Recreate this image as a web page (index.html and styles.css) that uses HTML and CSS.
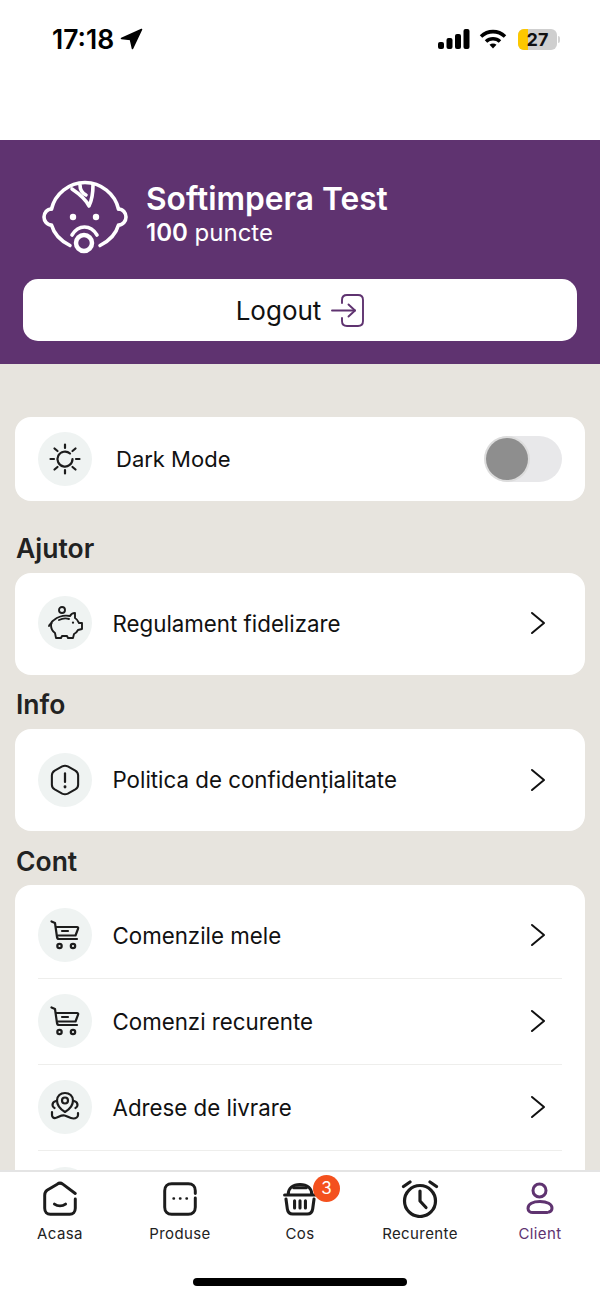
FILE: index.html

```html
<!DOCTYPE html>
<html lang="en">
<head>
  <meta charset="UTF-8" />
  <title>Client</title>
  <link rel="stylesheet" href="styles.css">
</head>
<body>
  <div class="page">
    <div class="status">
      <div class="status-left">
        <span class="time">17:18</span>
        <svg class="loc" width="23" height="22" viewBox="0 0 23 22"><path d="M21.500 1.500 1.500 10.500 10.500 11.500 12.500 20.500z" fill="#000" stroke="#000" stroke-width="1.600" stroke-linejoin="round"/></svg>
      </div>
      <div class="status-right">
        <svg width="32" height="20" viewBox="0 0 32 20"><rect x="0" y="13" width="6" height="7" rx="2"/><rect x="8.500" y="9" width="6" height="11" rx="2"/><rect x="17" y="5" width="6" height="15" rx="2"/><rect x="25.500" y="0" width="6" height="20" rx="2"/></svg>
        <svg width="28" height="20" viewBox="0 0 28 20" fill="none" stroke="#000" stroke-width="3.600"><path d="M2 7.500C9 1 19 1 26 7.500"/><path d="M7 12.500c4-3.700 10-3.700 14 0"/><path d="M14 19.500 10.500 15.800c2-1.600 5-1.600 7 0z" fill="#000" stroke="none"/></svg>
        <div class="battery">
          <div class="battery-fill"></div>
          <span class="battery-num">27</span>
        </div>
        <span class="battery-nub"></span>
      </div>
    </div>

    <header class="profile">
      <div class="profile-top">
        <svg class="baby" width="86" height="76" viewBox="0 0 86 76" fill="none" stroke="#fff" stroke-width="3.600" stroke-linecap="round" stroke-linejoin="round">
          <path d="M9.500 29C13 14 27 2.500 43 2.500S73 14 76.500 29"/>
          <path d="M9.500 29C5 29 2 33 2 37s3 8 7.500 8C12 54 19 61 28 65.500"/>
          <path d="M76.500 29C81 29 84 33 84 37s-3 8-7.500 8C74 54 67 61 58 65.500"/>
          <path d="M30 55c3-5 7-8 12.500-8S52 50 55 55"/>
          <circle cx="42" cy="63" r="8" stroke-width="4.500"/>
          <circle cx="31" cy="37" r="3.200" fill="#fff" stroke="none"/>
          <circle cx="54" cy="37" r="3.200" fill="#fff" stroke="none"/>
          <path d="M30 9C36 13 43 18 47 26 50 20 51 12 51 5"/>
          <path d="M38 5c0 5 2 8 6 10"/>
        </svg>
        <div class="profile-text">
          <div class="profile-name">Softimpera Test</div>
          <div class="profile-points"><b>100</b> puncte</div>
        </div>
      </div>
      <button class="logout" type="button">
        <span>Logout</span>
        <svg width="33" height="33" viewBox="0 0 33 33" fill="none" stroke="#5f3370" stroke-width="1.900" stroke-linecap="round" stroke-linejoin="round"><path d="M11 9V6c0-3 2-5 5-5h11c3 0 5 2 5 5v21c0 3-2 5-5 5H16c-3 0-5-2-5-5v-3"/><path d="M1 16.500h23"/><path d="m17.500 10.500 6.500 6-6.500 6"/></svg>
      </button>
    </header>

    <main class="content">
      <div class="card card-mode">
        <div class="row row-mode">
          <span class="circle">
            <svg width="32" height="32" viewBox="0 0 32 32" fill="none" stroke="#1c1c1c" stroke-width="2.200" stroke-linecap="round"><path d="M21 10.500a7.500 7.500 0 1 0 2.500 5.500"/><path d="M16 1.500v3.500M16 27v3.500M1.500 16H5M27 16h3.500M5.500 5.500 8.500 8M23.500 24l3 2.500M26.500 5.500 23.500 8M8.500 24l-3 2.500"/></svg>
          </span>
          <span class="row-label mode-label">Dark Mode</span>
          <span class="toggle"><span class="knob"></span></span>
        </div>
      </div>

      <h3 class="section section-first">Ajutor</h3>
      <div class="card">
        <div class="row row-single">
          <span class="circle">
            <svg width="36" height="36" viewBox="0 0 36 36" fill="none" stroke="#1c1c1c" stroke-width="1.900" stroke-linecap="round" stroke-linejoin="round"><circle cx="15" cy="5" r="3"/><path d="M7 15C12 11 18 10 23 11 24 9 26 8 28 8L28 13C30 14 31 16 32 18L35 18V24L31 25C30 27 29 28 27 29L26 33H21L20 31H15L14 33H9L8 28C5 26 4 23 4 20 4 18 5 16 7 15z"/><path d="M4.500 18C3 19.500 2 20 2 21"/><path d="M12 15c3-1.500 7-2 10-1"/><path d="M26 17.500v.2" stroke-width="2.200"/></svg>
          </span>
          <span class="row-label">Regulament fidelizare</span>
          <svg class="chevron" width="16" height="24" viewBox="0 0 16 24" fill="none" stroke="#111" stroke-width="2" stroke-linecap="round" stroke-linejoin="round"><path d="m2 2 12 10L2 22"/></svg>
        </div>
      </div>

      <h3 class="section">Info</h3>
      <div class="card">
        <div class="row row-single">
          <span class="circle">
            <svg width="30" height="32" viewBox="0 0 32 34" fill="none" stroke="#1c1c1c" stroke-width="2.200" stroke-linecap="round" stroke-linejoin="round"><path d="M13 2.500c2-1 4-1 6 0l8 4.500c2 1.200 3 3 3 5v10c0 2-1 3.800-3 5l-8 4.500c-2 1-4 1-6 0l-8-4.500c-2-1.200-3-3-3-5V12c0-2 1-3.800 3-5z"/><path d="M16 10v9" stroke-width="2.400"/><path d="M16 24v.5" stroke-width="3"/></svg>
          </span>
          <span class="row-label">Politica de confidențialitate</span>
          <svg class="chevron" width="16" height="24" viewBox="0 0 16 24" fill="none" stroke="#111" stroke-width="2" stroke-linecap="round" stroke-linejoin="round"><path d="m2 2 12 10L2 22"/></svg>
        </div>
      </div>

      <h3 class="section">Cont</h3>
      <div class="card card-list">
        <div class="row">
          <span class="circle">
            <svg width="30" height="30" viewBox="0 0 30 30" fill="none" stroke="#1c1c1c" stroke-width="2.200" stroke-linecap="round" stroke-linejoin="round"><path d="M1.500 1.500 5 3l2 14c.2 1.500 1 2 2 2h18"/><path d="M6 7h21c1 0 1.500.8 1 1.800l-2.500 6.700H8"/><path d="M12 11h6"/><circle cx="9.500" cy="26" r="2.200"/><circle cx="23" cy="26" r="2.200"/></svg>
          </span>
          <span class="row-label">Comenzile mele</span>
          <svg class="chevron" width="16" height="24" viewBox="0 0 16 24" fill="none" stroke="#111" stroke-width="2" stroke-linecap="round" stroke-linejoin="round"><path d="m2 2 12 10L2 22"/></svg>
        </div>
        <div class="row">
          <span class="circle">
            <svg width="30" height="30" viewBox="0 0 30 30" fill="none" stroke="#1c1c1c" stroke-width="2.200" stroke-linecap="round" stroke-linejoin="round"><path d="M1.500 1.500 5 3l2 14c.2 1.500 1 2 2 2h18"/><path d="M6 7h21c1 0 1.500.8 1 1.800l-2.500 6.700H8"/><path d="M12 11h6"/><circle cx="9.500" cy="26" r="2.200"/><circle cx="23" cy="26" r="2.200"/></svg>
          </span>
          <span class="row-label">Comenzi recurente</span>
          <svg class="chevron" width="16" height="24" viewBox="0 0 16 24" fill="none" stroke="#111" stroke-width="2" stroke-linecap="round" stroke-linejoin="round"><path d="m2 2 12 10L2 22"/></svg>
        </div>
        <div class="row">
          <span class="circle">
            <svg width="30" height="32" viewBox="0 0 30 32" fill="none" stroke="#1c1c1c" stroke-width="2.200" stroke-linecap="round" stroke-linejoin="round"><path d="M15 21C10 18 7 14 7 9.500 7 5 10.500 2 15 2s8 3 8 7.500C23 14 20 18 15 21z"/><circle cx="15" cy="9.500" r="3"/><path d="M6 10c-2 .5-3.500 2-3.500 4 0 1.500 1 2.500 2 3"/><path d="M24 10c2 .5 3.500 2 3.500 4 0 1.500-1 2.500-2 3"/><path d="M2 21v3c0 2 1.500 3.500 3.500 3 3-.5 5-3 9-2.500 3 .5 5 3 9 3 2.500 0 4.500-1.500 4.500-3.500v-2"/></svg>
          </span>
          <span class="row-label">Adrese de livrare</span>
          <svg class="chevron" width="16" height="24" viewBox="0 0 16 24" fill="none" stroke="#111" stroke-width="2" stroke-linecap="round" stroke-linejoin="round"><path d="m2 2 12 10L2 22"/></svg>
        </div>
        <div class="row">
          <span class="circle"></span>
        </div>
      </div>
    </main>

    <nav class="tabbar">
      <div class="tabs">
        <div class="tab">
          <svg width="38" height="38" viewBox="-1.500 -1.500 41 41" fill="none" stroke="#1c1c1c" stroke-width="3.200" stroke-linecap="round" stroke-linejoin="round"><path d="M35.500 13 22 3c-2-1.500-4-1.500-6 0L5 9.500C3 11 2.500 12.500 2.500 15v14c0 4 2.500 6.500 6 6.500h21c3.500 0 6-2.500 6-6.500V19"/><path d="M13 24.500c3.500 2.500 8.500 2.500 12 0"/></svg>
          <span>Acasa</span>
        </div>
        <div class="tab">
          <svg width="38" height="38" viewBox="-1.500 -1.500 41 41" fill="none" stroke="#1c1c1c" stroke-width="3.200" stroke-linecap="round" stroke-linejoin="round"><path d="M35.500 13v-3c0-4.500-3-7.500-7.500-7.500H10C5.500 2.500 2.500 5.500 2.500 10v18c0 4.500 3 7.500 7.500 7.500h18c4.500 0 7.500-3 7.500-7.500V18"/><path d="M12 18.500h.5M19 18.500h.5M26 18.500h.5" stroke-width="2.600"/></svg>
          <span>Produse</span>
        </div>
        <div class="tab">
          <span class="tab-icon">
            <svg width="38" height="38" viewBox="-2 -2 42 42" fill="none" stroke="#1c1c1c" stroke-width="3.400" stroke-linecap="round" stroke-linejoin="round"><path d="M6 14c0-7 5-11 13-11s13 4 13 11"/><path d="M12 6.500h14"/><path d="M2 14.500h34"/><path d="M3.500 19 5 30c.5 3.500 3 5.500 6 5.500h16c3 0 5.500-2 6-5.500l1.500-11"/><path d="M13 21v8M19 21v8M25 21v8"/></svg>
            <span class="badge">3</span>
          </span>
          <span>Cos</span>
        </div>
        <div class="tab">
          <svg width="38" height="38" viewBox="0 0 38 38" fill="none" stroke="#1c1c1c" stroke-width="3.200" stroke-linecap="round" stroke-linejoin="round"><circle cx="19" cy="21" r="15.500"/><path d="M19 11v10l6 6.500"/><path d="M2.500 6.500 9 2M35.500 6.500 29 2"/></svg>
          <span>Recurente</span>
        </div>
        <div class="tab tab-active">
          <svg width="38" height="38" viewBox="0 0 38 38" fill="none" stroke="#5f3370" stroke-width="3" stroke-linecap="round" stroke-linejoin="round"><circle cx="18.500" cy="10.500" r="6.500"/><path d="M26 32.500H13C9 33 7 31 7 28.500 7 24 12 21.500 19 21.500S31 24 31 28c0 2-1 3.500-3 4"/></svg>
          <span>Client</span>
        </div>
      </div>
      <div class="home-bar"></div>
    </nav>
  </div>
</body>
</html>
```

FILE: styles.css

```css
* {
  box-sizing: border-box;
}
body {
  margin: 0;
  font-family: Inter, "Liberation Sans", sans-serif;
  background: #fff;
  color: #111;
}
.page {
  display: flex;
  flex-direction: column;
  height: 100vh;
  overflow: hidden;
}

/* status bar */
.status {
  height: 140px;
  flex: none;
  display: flex;
  justify-content: space-between;
  align-items: flex-start;
  padding: 24px 40px 0 52px;
}
.status-left, .status-right {
  display: flex;
  align-items: center;
  height: 30px;
}
.time {
  font-size: 26.500px;
  font-weight: 600;
  color: #000;
}
.loc {
  margin-left: 6px;
}
.status-right {
  gap: 9px;
}
.battery {
  position: relative;
  width: 39px;
  height: 21px;
  border-radius: 6px;
  background: #cfcfcf;
  overflow: hidden;
  margin-left: 2px;
  text-align: center;
}
.battery-fill {
  position: absolute;
  left: 0;
  top: 0;
  bottom: 0;
  width: 10px;
  background: #fdc800;
}
.battery-num {
  position: relative;
  font-size: 18px;
  font-weight: 700;
  line-height: 21px;
  color: #111;
}
.battery-nub {
  width: 2px;
  height: 7px;
  background: #d4d4d4;
  border-radius: 0 2px 2px 0;
  margin-left: -8px;
}

/* header */
.profile {
  background: #5f3370;
  height: 224px;
  flex: none;
  padding: 40px 23px 0;
}
.profile-top {
  display: flex;
  align-items: flex-start;
  gap: 18px;
  padding-left: 19px;
  height: 76px;
}
.profile-name {
  color: #fff;
  font-size: 31.700px;
  font-weight: 600;
  line-height: 38px;
}
.profile-points {
  color: #fff;
  font-size: 24px;
  line-height: 30px;
}
.profile-points b {
  font-weight: 600;
}
.logout {
  width: 100%;
  height: 62px;
  margin-top: 23px;
  border: 0;
  border-radius: 15px;
  background: #fff;
  display: flex;
  align-items: center;
  justify-content: center;
  gap: 10px;
  font-family: inherit;
  font-size: 26px;
  color: #111;
}

/* list */
.content {
  flex: 1;
  min-height: 0;
  overflow: hidden;
  background: #e7e4de;
  padding: 53px 15px 0;
}
.card {
  background: #fff;
  border-radius: 16px;
  padding: 0 23px;
}
.card-mode {
  height: 84px;
}
.section {
  margin: 0;
  height: 54.200px;
  padding: 11.500px 0 0 1px;
  font-size: 26.500px;
  line-height: 36px;
  font-weight: 600;
  color: #222;
}
.section-first {
  margin-top: 17.800px;
}
.row {
  display: flex;
  align-items: center;
  height: 86px;
  border-bottom: 1px solid #eeeeec;
}
.row:last-child {
  border-bottom: 0;
}
.row-mode {
  height: 84px;
}
.row-single {
  height: 102px;
  padding-bottom: 1px;
}
.card-list {
  padding-top: 7.500px;
}
.circle {
  width: 54px;
  height: 54px;
  flex: none;
  border-radius: 50%;
  background: #eff3f2;
  display: flex;
  align-items: center;
  justify-content: center;
}
.row-label {
  flex: 1;
  margin-left: 20.500px;
  font-size: 22.300px;
  color: #111;
}
.mode-label {
  margin-left: 24px;
  font-size: 22px;
}
.chevron {
  margin-right: 16px;
}
.toggle {
  width: 77px;
  height: 46px;
  border-radius: 23px;
  background: #e8e8ea;
  display: flex;
  align-items: center;
}
.knob {
  width: 42px;
  height: 42px;
  margin-left: 1px;
  border-radius: 50%;
  background: #8e8e8e;
  box-shadow: 0 0 0 2px #dcdcdc;
}

/* tab bar */
.tabbar {
  height: 128px;
  flex: none;
  background: #fff;
  border-top: 2px solid #e4e4e4;
}
.tabs {
  display: grid;
  grid-template-columns: repeat(5, 1fr);
  padding-top: 8px;
}
.tab {
  display: flex;
  flex-direction: column;
  align-items: center;
  font-size: 15px;
  letter-spacing: .4px;
  line-height: 18px;
  color: #222;
  gap: 7px;
}
.tab-icon {
  position: relative;
  display: block;
  height: 38px;
}
.tab-active {
  color: #5f3370;
}
.badge {
  position: absolute;
  top: -5px;
  left: 32px;
  width: 27px;
  height: 27px;
  border-radius: 50%;
  background: #f4511e;
  color: #fff;
  font-size: 17px;
  line-height: 27px;
  text-align: center;
  letter-spacing: 0;
}
.home-bar {
  width: 214px;
  height: 8px;
  border-radius: 4px;
  background: #000;
  margin: 35px auto 0;
}
```
